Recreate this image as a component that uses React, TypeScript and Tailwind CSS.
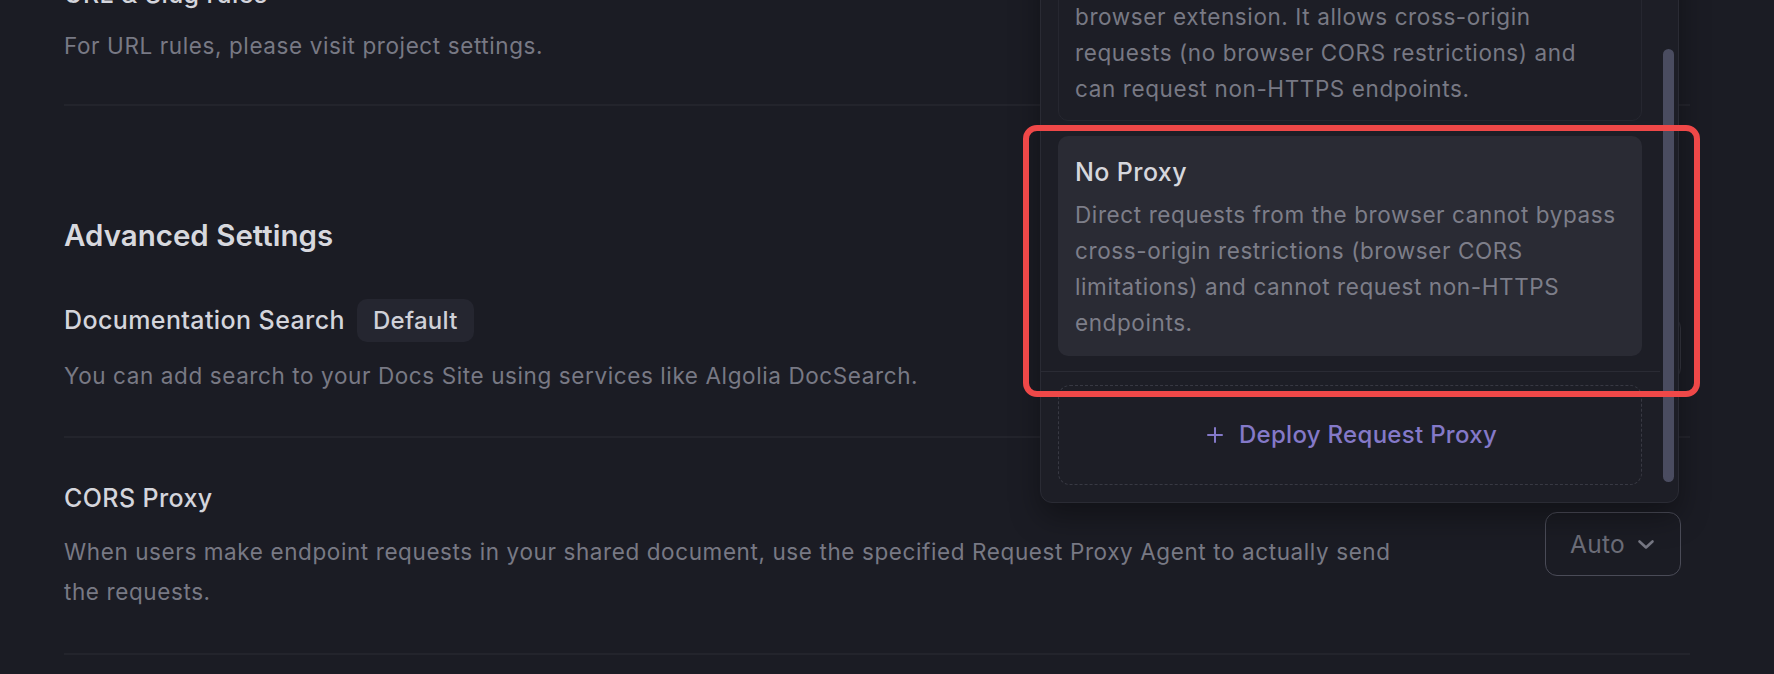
import React from "react";
import { Plus } from "lucide-react";

function Divider({ className = "" }: { className?: string }) {
  return <div className={`h-[2px] w-full shrink-0 bg-[#23242c] ${className}`} />;
}

function Chevron() {
  return (
    <svg width="18" height="11" viewBox="0 0 18 11" fill="none" className="text-[#767783]">
      <path d="M2.5 2.5 L9 8.5 L15.5 2.5" stroke="currentColor" strokeWidth="2.6" strokeLinecap="round" strokeLinejoin="round" />
    </svg>
  );
}

export default function App() {
  return (
    <div className="relative h-[674px] w-[1774px] overflow-hidden bg-[#1b1c24] font-['Inter',sans-serif] antialiased">
      {/* Main column */}
      <div className="ml-[64px] -mt-[22px] flex w-[1626px] flex-col">
        {/* URL & Slug rules */}
        <div className="text-[25px] font-medium leading-[32px] tracking-[0.4px] text-[#d4d5dc]">URL &amp; Slug rules</div>
        <div className="mt-[16px] text-[22.5px] leading-[40px] tracking-[0.6px] text-[#787984]">
          For URL rules, please visit project settings.
        </div>
        <Divider className="mt-[38px]" />

        {/* Advanced Settings */}
        <div className="mt-[109px] text-[29.5px] font-semibold leading-[40px] text-[#d7d8de]">
          Advanced Settings
        </div>

        {/* Documentation Search row */}
        <div className="mt-[44px] flex items-center justify-between">
          <div className="flex flex-col">
            <div className="flex items-center gap-[12px]">
              <span className="text-[25px] font-medium leading-[43px] tracking-[0.4px] text-[#d4d5dc]">Documentation Search</span>
              <span className="flex h-[43px] items-center rounded-[10px] bg-[#252630] px-[16px] text-[24px] font-medium tracking-[0.3px] text-[#d0d1d8]">
                Default
              </span>
            </div>
            <div className="mt-[14px] text-[22.5px] leading-[40px] tracking-[0.6px] text-[#787984]">
              You can add search to your Docs Site using services like Algolia DocSearch.
            </div>
          </div>
          <div className="mr-[9px] flex h-[64px] w-[180px] items-center justify-center gap-2 rounded-[12px] border-[1.5px] border-[#34353f] text-[24px] text-[#6c6d78]">
            Algolia
          </div>
        </div>
        <Divider className="mt-[40px]" />

        {/* CORS Proxy row */}
        <div className="mt-[44px] flex items-center justify-between">
          <div className="flex flex-col">
            <div className="text-[25px] font-medium leading-[32px] tracking-[0.4px] text-[#d4d5dc]">CORS Proxy</div>
            <div className="mt-[18px] text-[22.5px] leading-[40px] tracking-[0.6px] text-[#787984]">
              <span className="block whitespace-nowrap">
                When users make endpoint requests in your shared document, use the specified Request Proxy Agent to actually send
              </span>
              <span className="block whitespace-nowrap">the requests.</span>
            </div>
          </div>
          <div className="mr-[9px] mb-[6px] flex h-[64px] w-[136px] items-center gap-[12px] rounded-[12px] border-[1.5px] border-[#4a4b57] pl-[24px] text-[24.5px] tracking-[0.3px] text-[#6c6d78]">
            Auto
            <Chevron />
          </div>
        </div>
        <Divider className="mt-[41px]" />
      </div>

      {/* Dropdown popup */}
      <div className="absolute left-[1040px] top-[-60px] h-[563px] w-[639px] overflow-hidden rounded-[12px] border border-[#2a2b34] bg-[#1d1e26] shadow-[0_14px_30px_rgba(0,0,0,0.35)]">
        <div className="flex h-full flex-col justify-end">
          {/* previous option card */}
          <div className="mx-[17px] w-[584px] shrink-0 rounded-[10px] border border-[#262730] bg-[#1d1e26] px-[16px] pb-[13px] text-[22.5px] leading-[36px] tracking-[0.6px] text-[#787984]">
            <span className="block text-[25px] font-medium tracking-[0.4px] text-[#d4d5dc]">Browser Extension</span>
            <span className="block whitespace-nowrap">Use the Request Proxy Agent provided by the</span>
            <span className="block whitespace-nowrap">browser extension. It allows cross-origin</span>
            <span className="block whitespace-nowrap">requests (no browser CORS restrictions) and</span>
            <span className="block whitespace-nowrap">can request non-HTTPS endpoints.</span>
          </div>

          {/* No Proxy card */}
          <div className="mx-[17px] mt-[15px] w-[584px] shrink-0 rounded-[10px] bg-[#2a2b34] px-[17px] pb-[15px] pt-[18px]">
            <div className="text-[25px] font-medium leading-[36px] tracking-[0.4px] text-[#d6d7dd]">No Proxy</div>
            <div className="mt-[7px] text-[22.5px] leading-[36px] tracking-[0.6px] text-[#7d7e89]">
              <span className="block whitespace-nowrap">Direct requests from the browser cannot bypass</span>
              <span className="block whitespace-nowrap">cross-origin restrictions (browser CORS</span>
              <span className="block whitespace-nowrap">limitations) and cannot request non-HTTPS</span>
              <span className="block whitespace-nowrap">endpoints.</span>
            </div>
          </div>

          <div className="mt-[15px] h-[1.5px] w-[619px] shrink-0 bg-[#2a2b34]" />

          {/* Deploy request proxy */}
          <div className="mx-[17px] mb-[17px] mt-[13px] flex h-[100px] w-[584px] shrink-0 items-center justify-center gap-[12px] rounded-[12px] border-[1.5px] border-dashed border-[#383943] text-[24px] font-medium tracking-[0.3px] text-[#8479c8]">
            <Plus size={24} strokeWidth={2} />
            Deploy Request Proxy
          </div>
        </div>

        {/* scrollbar */}
        <div className="absolute left-[622px] top-[108px] h-[433px] w-[11px] rounded-full bg-[#4a4c60]" />
      </div>

      {/* Red highlight */}
      <div className="pointer-events-none absolute left-[1023px] top-[125px] h-[272px] w-[677px] rounded-[14px] border-[6px] border-[#ef4848]" />
    </div>
  );
}
